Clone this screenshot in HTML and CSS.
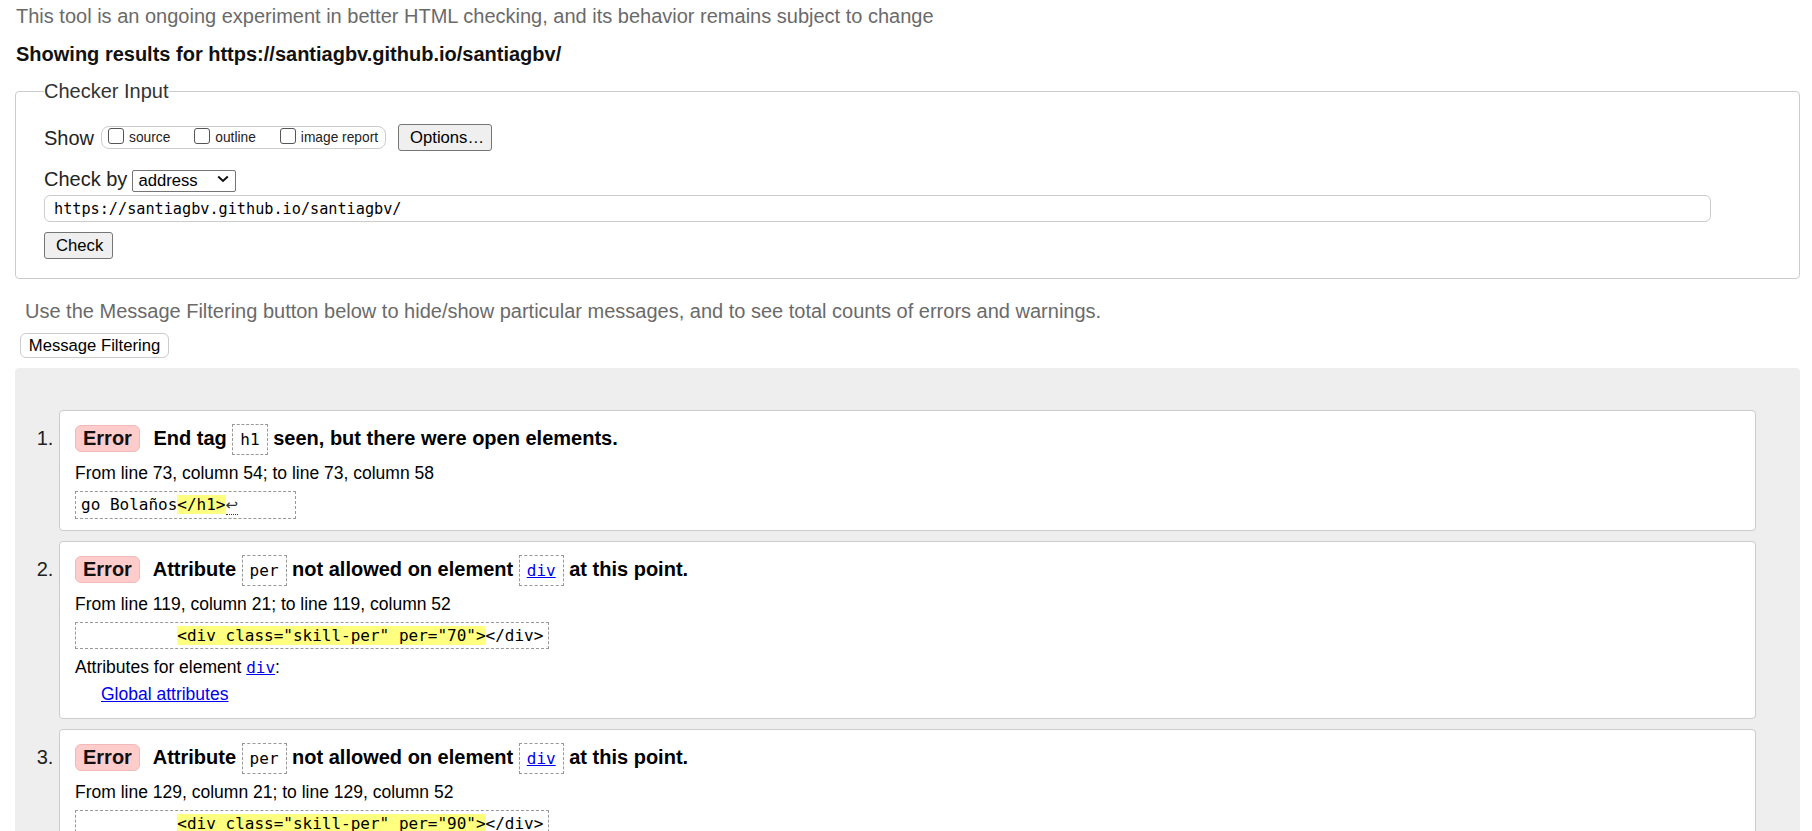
FILE: index.html
```html
<!DOCTYPE html>
<html lang="en">
<head>
<meta charset="utf-8">
<title>Nu Html Checker</title>
<link rel="stylesheet" href="styles.css">
</head>
<body>
<p class="experiment">This tool is an ongoing experiment in better HTML checking, and its behavior remains subject to change</p>
<p class="showing">Showing results for https://santiagbv.github.io/santiagbv/</p>

<form class="checker-form">
  <fieldset class="checker">
    <legend>Checker Input</legend>
    <div class="row show-row">
      <span class="row-label">Show</span>
      <span class="show-group">
        <label class="opt"><input type="checkbox" class="cb">source</label>
        <label class="opt"><input type="checkbox" class="cb">outline</label>
        <label class="opt"><input type="checkbox" class="cb">image report</label>
      </span>
      <button type="button" class="btn options-btn">Options…</button>
    </div>
    <div class="row checkby-row">
      <span class="row-label">Check by</span>
      <span class="select-wrap">
        <select class="select"><option>address</option></select>
        <svg class="chev" width="12" height="8" viewBox="0 0 12 8"><polyline points="1.2,1.5 6,6 10.8,1.5" fill="none" stroke="#111" stroke-width="2"/></svg>
      </span>
    </div>
    <div class="row url-row">
      <input class="url" type="text" value="https://santiagbv.github.io/santiagbv/">
    </div>
    <div class="row check-row">
      <button type="button" class="btn check-btn">Check</button>
    </div>
  </fieldset>
</form>

<p class="filter-note">Use the Message Filtering button below to hide/show particular messages, and to see total counts of errors and warnings.</p>
<button type="button" class="filter-btn">Message Filtering</button>

<div class="results">
  <ol class="messages">
    <li class="msg">
      <p class="msg-title"><strong class="badge">Error</strong> End tag <code class="tc">h1</code> seen, but there were open elements.</p>
      <p class="location">From line 73, column 54; to line 73, column 58</p>
      <p class="extract"><code class="ext ext-tail">go Bolaños<span class="hl">&lt;/h1&gt;</span><span class="lf">↩</span>     </code></p>
    </li>
    <li class="msg">
      <p class="msg-title"><strong class="badge">Error</strong> Attribute <code class="tc">per</code> not allowed on element <code class="tc"><a href="#">div</a></code> at this point.</p>
      <p class="location">From line 119, column 21; to line 119, column 52</p>
      <p class="extract"><code class="ext">          <span class="hl">&lt;div class="skill-per" per="70"&gt;</span>&lt;/div&gt;</code></p>
      <dl class="attrs">
        <dt>Attributes for element <code class="mono-link"><a href="#">div</a></code>:</dt>
        <dd><a href="#">Global attributes</a></dd>
      </dl>
    </li>
    <li class="msg">
      <p class="msg-title"><strong class="badge">Error</strong> Attribute <code class="tc">per</code> not allowed on element <code class="tc"><a href="#">div</a></code> at this point.</p>
      <p class="location">From line 129, column 21; to line 129, column 52</p>
      <p class="extract"><code class="ext">          <span class="hl">&lt;div class="skill-per" per="90"&gt;</span>&lt;/div&gt;</code></p>
      <dl class="attrs">
        <dt>Attributes for element <code class="mono-link"><a href="#">div</a></code>:</dt>
        <dd><a href="#">Global attributes</a></dd>
      </dl>
    </li>
  </ol>
</div>
</body>
</html>
```
FILE: styles.css
```css
html { background: #fff; }
body {
  margin: 0;
  padding: 0 12px 0 15px;
  font-family: "Liberation Sans", Arial, sans-serif;
  font-size: 20px;
  color: #000;
}
p { margin: 0; }

.experiment {
  margin: 4px 0 0 1px;
  line-height: 24px;
  color: #6a6a6a;
}
.showing {
  margin: 14px 0 0 1px;
  line-height: 24px;
  font-weight: bold;
  color: #111;
}

.checker-form { margin: 13px 0 0 0; }
.checker {
  margin: 0;
  min-inline-size: 0;
  padding: 0 28px 19px 28px;
  border: 1px solid #ccc;
  border-radius: 4px;
  color: #222;
}
.checker legend {
  padding: 0;
  font-size: 20px;
  line-height: 24px;
  color: #333;
}
.row { display: flex; align-items: center; }
.row-label { font-size: 20px; line-height: 24px; }

.show-row { margin-top: 21px; height: 27px; }
.show-group {
  margin-left: 7px;
  box-sizing: border-box;
  height: 23px;
  display: flex;
  align-items: center;
  gap: 24px;
  padding: 1px 7px 0 6px;
  border: 1px solid #ccc;
  border-radius: 8px;
  font-size: 13.75px;
  color: #222;
}
.opt { display: flex; align-items: center; gap: 5px; line-height: 16px; }
.cb {
  -webkit-appearance: none;
  appearance: none;
  box-sizing: border-box;
  width: 16px;
  height: 16px;
  margin: 0 0 5px 0;
  border: 1px solid #555;
  border-radius: 3px;
  background: #fff;
}
.btn {
  box-sizing: border-box;
  height: 27px;
  padding: 0 11px;
  font-family: "Liberation Sans", Arial, sans-serif;
  font-size: 16.67px;
  color: #000;
  background: #efefef;
  border: 1px solid #767676;
  border-radius: 3px;
}
.options-btn { margin-left: 12px; width: 94px; }

.checkby-row { margin-top: 16px; height: 24px; }
.select-wrap { position: relative; margin-left: 5px; display: inline-block; height: 22px; }
.select {
  -webkit-appearance: none;
  appearance: none;
  box-sizing: border-box;
  width: 104px;
  height: 22px;
  margin: 0;
  padding: 0 0 0 5px;
  font-family: "Liberation Sans", Arial, sans-serif;
  font-size: 16.67px;
  color: #000;
  background: #fff;
  border: 1px solid #767676;
  border-radius: 2px;
}
.chev { position: absolute; right: 7px; top: 7px; pointer-events: none; }

.url-row { margin-top: 4px; }
.url {
  box-sizing: border-box;
  width: calc(100% - 60px);
  height: 27px;
  margin: 0;
  padding: 0 9px;
  font-family: "DejaVu Sans Mono", "Liberation Mono", monospace;
  font-size: 15.2px;
  color: #000;
  border: 1px solid #ccc;
  border-radius: 6px;
  background: #fff;
}
.check-row { margin-top: 10px; }
.check-btn { width: 69px; }

.filter-note {
  margin: 20px 0 0 10px;
  line-height: 24px;
  color: #6a6a6a;
}
.filter-btn {
  display: block;
  box-sizing: border-box;
  margin: 10px 0 0 5px;
  width: 149px;
  height: 25px;
  padding: 0;
  font-family: "Liberation Sans", Arial, sans-serif;
  font-size: 16.67px;
  color: #000;
  background: #fff;
  border: 1px solid #ccc;
  border-radius: 6px;
}

.results {
  margin-top: 10px;
  background: #eee;
  border-radius: 4px;
  padding: 42px 44px 20px 44px;
}
.messages { margin: 0; padding: 0; list-style: decimal; }
.msg {
  font-size: 20px;
  background: #fff;
  border: 1px solid #ccc;
  border-radius: 4px;
  padding: 14px 15px 11px 15px;
  margin-bottom: 10px;
  color: #000;
}
.msg::marker { color: #222; }
.msg-title { line-height: 27px; font-weight: bold; }
.badge {
  display: inline-block;
  vertical-align: top;
  box-sizing: border-box;
  height: 27px;
  line-height: 25px;
  padding: 0 7px;
  margin-right: 8px;
  background: #fcc;
  border: 1px solid #f3b9b9;
  border-radius: 6px;
  color: #111;
}
.tc {
  font-family: "DejaVu Sans Mono", "Liberation Mono", monospace;
  font-size: 16px;
  font-weight: normal;
  padding: 5px 7px;
  border: 1px dashed #999;
}
a { color: #00e; text-decoration: underline; }
.location { margin-top: 10px; font-size: 17.5px; line-height: 20px; }
.extract { margin-top: 8px; line-height: 0; }
.ext {
  display: inline-block;
  white-space: pre;
  font-family: "DejaVu Sans Mono", "Liberation Mono", monospace;
  font-size: 16px;
  line-height: 21px;
  padding: 2px 5px;
  border: 1px dashed #999;
}
.ext-tail { padding-right: 9px; }
.hl { background: #ffff80; }
.lf {
  font-family: "DejaVu Sans", sans-serif;
  font-size: 15px;
  border-bottom: 1px dotted #333;
  color: #333;
}
.attrs { margin: 8px 0 3px 0; font-size: 17.5px; line-height: 20px; }
.attrs dt { margin: 0; }
.attrs dd { margin: 6px 0 0 26px; }
.mono-link { font-family: "DejaVu Sans Mono", "Liberation Mono", monospace; font-size: 16px; }
```
